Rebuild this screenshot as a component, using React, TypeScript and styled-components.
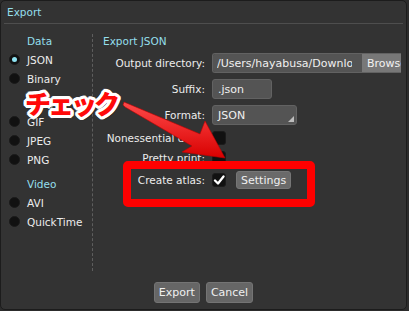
import React from "react";
import styled, { createGlobalStyle } from "styled-components";

const Global = createGlobalStyle`
  html, body { margin: 0; padding: 0; background: #2c2c2c; }
  body { font-family: "DejaVu Sans", "Liberation Sans", sans-serif; }
  * { box-sizing: border-box; }
`;

const Window = styled.div`
  position: relative;
  width: 407px;
  height: 310px;
  border: 1px solid #1c1c1c;
  border-radius: 5px;
  background: #333333;
  display: flex;
  flex-direction: column;
  overflow: hidden;
  font-size: 10.5px;
  color: #e8e8e8;
`;

const TitleBar = styled.div`
  height: 23px;
  margin: 0 3px;
  padding-left: 3px;
  display: flex;
  align-items: center;
  color: #94dfec;
  font-size: 10.5px;
  border-bottom: 1px solid #4e4e4e;
`;

const Body = styled.div`
  flex: 1;
  display: flex;
  padding-top: 10px;
  min-height: 0;
`;

const Sidebar = styled.div`
  width: 92px;
  border-right: 1px dashed #5e5e5e;
  display: flex;
  flex-direction: column;
`;

const SideList = styled.div`
  margin-top: -3px;
  display: flex;
  flex-direction: column;
`;

const GroupHeader = styled.div<{ $first?: boolean }>`
  height: 19px;
  display: flex;
  align-items: center;
  padding-left: 26px;
  color: #94dfec;
  margin-top: ${(p) => (p.$first ? "0" : "5px")};
`;

const RadioRow = styled.div`
  height: 19px;
  display: flex;
  align-items: center;
  padding-left: 8px;
  gap: 7px;
  color: #ececec;
`;

const RadioDot = styled.span<{ $on?: boolean }>`
  width: 11px;
  height: 11px;
  border-radius: 50%;
  background: #111;
  border: 1px solid #1a1a1a;
  display: flex;
  align-items: center;
  justify-content: center;
  &::after {
    content: "";
    width: 5px;
    height: 5px;
    border-radius: 50%;
    background: ${(p) => (p.$on ? "#8fe3f2" : "transparent")};
  }
`;

const Panel = styled.div`
  flex: 1;
  padding-left: 10px;
  display: flex;
  flex-direction: column;
  overflow: hidden;
`;

const PanelHeader = styled.div`
  height: 19px;
  margin-top: -3px;
  margin-bottom: 3px;
  display: flex;
  align-items: center;
  color: #94dfec;
`;

const Form = styled.div`
  display: grid;
  grid-template-columns: 102px 1fr;
  grid-template-rows: 20px 20px 20px 14px 14px 18px;
  column-gap: 7px;
  row-gap: 6px;
  align-items: center;
`;

const Label = styled.div`
  text-align: right;
  white-space: nowrap;
  color: #ececec;
`;

const Controls = styled.div`
  display: flex;
  align-items: center;
  height: 100%;
  min-width: 0;
`;

const InputGroup = styled.div`
  display: flex;
  height: 20px;
  width: 189px;
  border-radius: 3px 0 0 3px;
  overflow: hidden;
  border: 1px solid #626262;
  border-right: none;
`;

const TextField = styled.div<{ $w?: number }>`
  height: 20px;
  width: ${(p) => (p.$w ? `${p.$w}px` : "auto")};
  flex: ${(p) => (p.$w ? "none" : "1")};
  background: #545454;
  border: 1px solid #626262;
  border-radius: 3px;
  padding: 0 5px;
  display: flex;
  align-items: center;
  white-space: nowrap;
  overflow: hidden;
  color: #f0f0f0;
  font-size: 11px;
`;

const PathField = styled.div`
  width: 149px;
  flex: none;
  height: 100%;
  background: #545454;
  padding: 0 4px;
  display: flex;
  align-items: center;
  color: #f0f0f0;
  font-size: 11px;
`;

const PathText = styled.span`
  display: block;
  width: 135px;
  white-space: nowrap;
  overflow: hidden;
`;

const BrowseButton = styled.div`
  flex: none;
  width: 50px;
  height: 100%;
  background: #787878;
  padding-left: 5px;
  display: flex;
  align-items: center;
  white-space: nowrap;
  color: #f2f2f2;
  font-size: 11px;
`;

const SelectField = styled(TextField)`
  position: relative;
  &::after {
    content: "";
    position: absolute;
    right: 2px;
    bottom: 2px;
    width: 0;
    height: 0;
    border-left: 6px solid transparent;
    border-bottom: 6px solid #bdbdbd;
  }
`;

const Check = styled.span`
  width: 14px;
  height: 14px;
  border-radius: 3px;
  background: #111;
  border: 1px solid #1b1b1b;
  display: flex;
  align-items: center;
  justify-content: center;
  flex: none;
`;

const SmallButton = styled.div`
  margin-left: 10px;
  height: 18px;
  padding: 0 4px;
  background: #6a6a6a;
  border: 1px solid #767676;
  border-radius: 3px;
  display: flex;
  align-items: center;
  color: #f0f0f0;
  font-size: 11px;
`;

const Footer = styled.div`
  height: 38px;
  display: flex;
  justify-content: center;
  align-items: flex-start;
  padding-top: 11px;
  gap: 6px;
`;

const FooterButton = styled.div`
  height: 21px;
  padding: 0 4px;
  background: #666;
  border: 1px solid #747474;
  border-radius: 3px;
  display: flex;
  align-items: center;
  color: #f0f0f0;
  font-size: 11px;
`;

const Highlight = styled.div`
  position: absolute;
  left: 122px;
  top: 160px;
  width: 192px;
  height: 46px;
  border: 8px solid #ff0000;
  border-radius: 5px;
  pointer-events: none;
`;

const Callout = styled.span`
  position: absolute;
  left: 24px;
  top: 89px;
  font-family: "Noto Sans CJK JP", sans-serif;
  font-weight: 900;
  font-size: 26px;
  letter-spacing: -3px;
  line-height: 1;
  color: #ff0a0a;
  text-shadow:
    2px 0 0 #fff, -2px 0 0 #fff, 0 2px 0 #fff, 0 -2px 0 #fff,
    2px 2px 0 #fff, -2px -2px 0 #fff, 2px -2px 0 #fff, -2px 2px 0 #fff,
    3px 0 0 #fff, -3px 0 0 #fff, 0 3px 0 #fff, 0 -3px 0 #fff,
    3px 1px 0 #fff, -3px 1px 0 #fff, 1px 3px 0 #fff, 1px -3px 0 #fff,
    3px -1px 0 #fff, -3px -1px 0 #fff, -1px 3px 0 #fff, -1px -3px 0 #fff,
    2px 3px 1px rgba(0,0,0,0.5);
  pointer-events: none;
`;

const ArrowLayer = styled.svg`
  position: absolute;
  left: 0;
  top: 0;
  width: 405px;
  height: 308px;
  pointer-events: none;
`;

const CheckMark = () => (
  <svg width="12" height="12" viewBox="0 0 12 12">
    <path d="M2 6.5 L5 9.5 L10.5 2.5" fill="none" stroke="#fff" strokeWidth="2.3" strokeLinecap="round" strokeLinejoin="round" />
  </svg>
);

export default function App() {
  return (
    <>
      <Global />
      <Window>
        <TitleBar>Export</TitleBar>
        <Body>
          <Sidebar>
            <SideList>
              <GroupHeader $first>Data</GroupHeader>
              <RadioRow><RadioDot $on />JSON</RadioRow>
              <RadioRow><RadioDot />Binary</RadioRow>
              <GroupHeader>Image</GroupHeader>
              <RadioRow><RadioDot />GIF</RadioRow>
              <RadioRow><RadioDot />JPEG</RadioRow>
              <RadioRow><RadioDot />PNG</RadioRow>
              <GroupHeader>Video</GroupHeader>
              <RadioRow><RadioDot />AVI</RadioRow>
              <RadioRow><RadioDot />QuickTime</RadioRow>
            </SideList>
          </Sidebar>
          <Panel>
            <PanelHeader>Export JSON</PanelHeader>
            <Form>
              <Label>Output directory:</Label>
              <Controls>
                <InputGroup>
                  <PathField><PathText>/Users/hayabusa/Downloads</PathText></PathField>
                  <BrowseButton>Browse</BrowseButton>
                </InputGroup>
              </Controls>
              <Label>Suffix:</Label>
              <Controls><TextField $w={60}>.json</TextField></Controls>
              <Label>Format:</Label>
              <Controls><SelectField $w={85}>JSON</SelectField></Controls>
              <Label>Nonessential data:</Label>
              <Controls><Check /></Controls>
              <Label>Pretty print:</Label>
              <Controls><Check /></Controls>
              <Label>Create atlas:</Label>
              <Controls>
                <Check><CheckMark /></Check>
                <SmallButton>Settings</SmallButton>
              </Controls>
            </Form>
          </Panel>
        </Body>
        <Footer>
          <FooterButton>Export</FooterButton>
          <FooterButton>Cancel</FooterButton>
        </Footer>

        <ArrowLayer viewBox="0 0 405 308">
          <defs>
            <linearGradient id="arr" x1="0" y1="0" x2="0" y2="1">
              <stop offset="0" stopColor="#ff4a4a" />
              <stop offset="1" stopColor="#d80000" />
            </linearGradient>
          </defs>
          <polygon
            points="123,101 199,133 204,120 224,157 181,151 191,145 124,106 122,104"
            fill="url(#arr)"
            stroke="#c00000"
            strokeWidth="0.6"
            strokeLinejoin="round"
          />
        </ArrowLayer>
        <Highlight />
        <Callout>チェック</Callout>
      </Window>
    </>
  );
}
